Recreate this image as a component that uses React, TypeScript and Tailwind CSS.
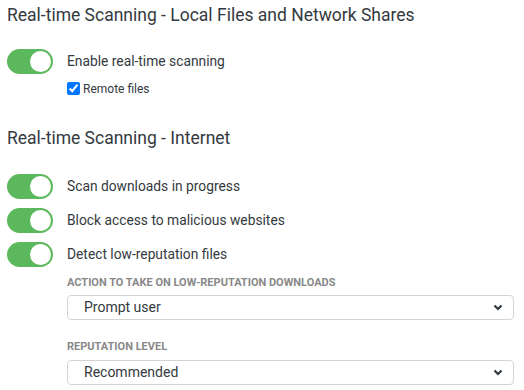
import React from "react";

function Toggle() {
  return (
    <div className="w-[46px] h-[25px] rounded-full bg-[#5cb85c] flex items-center justify-end pr-[2px] shrink-0">
      <div className="w-[21px] h-[21px] rounded-full bg-white" />
    </div>
  );
}

function ToggleRow({ label }: { label: string }) {
  return (
    <div className="flex items-center h-[25px] pl-[7px]">
      <Toggle />
      <span className="ml-[14px] text-[13.8px] text-[#343a40]">{label}</span>
    </div>
  );
}

function Chevron() {
  return (
    <svg width="10" height="7" viewBox="0 0 10 7" className="shrink-0">
      <polyline points="1.5,1.5 5,5 8.5,1.5" fill="none" stroke="#343a40" strokeWidth="2.2" />
    </svg>
  );
}

function Select({ value }: { value: string }) {
  return (
    <div className="h-[25px] border border-[#d4d4d4] rounded-[4px] flex items-center justify-between pl-[16px] pr-[10px] text-[14px] text-[#343a40]">
      <span>{value}</span>
      <Chevron />
    </div>
  );
}

export default function App() {
  return (
    <div className="w-[524px] h-[390px] bg-white font-['Roboto',sans-serif] text-[#343a40] overflow-hidden">
      <h2 className="h-[30px] leading-[30px] pl-[7px] text-[17.5px]">
        Real-time Scanning - Local Files and Network Shares
      </h2>
      <div className="mt-[19px]">
        <ToggleRow label="Enable real-time scanning" />
      </div>
      <div className="flex items-center pl-[67px] mt-[8px] h-[13px]">
        <input type="checkbox" checked readOnly className="w-[13px] h-[13px] m-0 accent-[#0075ff]" />
        <span className="ml-[3px] text-[12px]">Remote files</span>
      </div>
      <h2 className="mt-[28px] h-[30px] leading-[30px] pl-[7px] text-[17.5px]">
        Real-time Scanning - Internet
      </h2>
      <div className="mt-[21px] flex flex-col gap-[9px]">
        <ToggleRow label="Scan downloads in progress" />
        <ToggleRow label="Block access to malicious websites" />
        <ToggleRow label="Detect low-reputation files" />
      </div>
      <div className="pl-[67px] pr-[10px]">
        <div className="mt-[9px] h-[14px] leading-[14px] text-[11px] font-bold text-[#888] uppercase">
          Action to take on low-reputation downloads
        </div>
        <div className="mt-[5px]">
          <Select value="Prompt user" />
        </div>
        <div className="mt-[20px] h-[14px] leading-[14px] text-[11px] font-bold text-[#888] uppercase">
          Reputation level
        </div>
        <div className="mt-[6px]">
          <Select value="Recommended" />
        </div>
      </div>
    </div>
  );
}
